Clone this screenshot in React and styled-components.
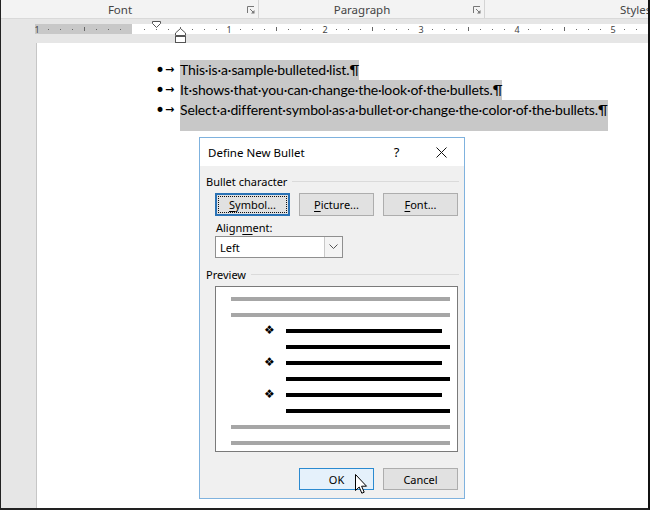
import React from "react";
import styled, { createGlobalStyle, css } from "styled-components";

const Global = createGlobalStyle`
  html, body { margin: 0; padding: 0; background: #fff; }
  #root { width: 650px; height: 510px; }
`;

const Frame = styled.div`
  width: 650px;
  height: 510px;
  box-sizing: border-box;
  border-left: 1px solid #222;
  border-right: 2px solid #111;
  border-bottom: 2px solid #222;
  display: flex;
  flex-direction: column;
  overflow: hidden;
  background: #e6e6e6;
`;

const Ribbon = styled.div`
  flex: 0 0 19px;
  box-sizing: border-box;
  display: flex;
  background: #f3f3f3;
  border-bottom: 1px solid #d9d9d9;
  font-family: "Noto Sans", sans-serif;
  font-size: 11.5px;
  color: #444;
  white-space: nowrap;
`;

const Group = styled.div`
  flex: 0 0 ${(p) => p.$w}px;
  box-sizing: border-box;
  display: flex;
  align-items: center;
  border-right: 1px solid #d4d4d4;
  padding: 0 3px 0 ${(p) => p.$pl || 0}px;
`;

const GroupLabel = styled.span`
  flex: 1;
  text-align: ${(p) => (p.$left ? "left" : "center")};
  padding-right: ${(p) => (p.$left ? 0 : 8)}px;
`;

const Launcher = styled.svg`
  flex: 0 0 8px;
  width: 8px;
  height: 8px;
  margin-top: 2px;
`;

const RulerRow = styled.div`
  position: relative;
  flex: 0 0 24px;
  box-sizing: border-box;
  padding: 5px 0 0 34px;
`;

const RulerSvg = styled.svg`
  display: block;
  width: 613px;
  height: 10px;
  overflow: visible;
`;

const Marker = styled.svg`
  position: absolute;
  left: ${(p) => p.$x}px;
  top: ${(p) => p.$y}px;
`;

const Workspace = styled.div`
  flex: 1;
  display: flex;
  padding-left: 35px;
  min-height: 0;
`;

const Page = styled.div`
  flex: 1;
  background: #fff;
  border-left: 1px solid #c6c6c6;
  padding-top: 17px;
  display: flex;
  flex-direction: column;
  align-items: flex-start;
`;

const List = styled.div`
  margin-left: 119px;
  display: flex;
  flex-direction: column;
  align-items: flex-start;
`;

const Para = styled.div`
  display: flex;
  align-items: flex-start;
  font-family: Lato, "Liberation Sans", sans-serif;
  font-size: 14px;
  letter-spacing: -0.13px;
  line-height: 20px;
  color: #000;
  white-space: nowrap;
`;

const BulletCell = styled.span`
  flex: 0 0 24px;
  display: flex;
  align-items: center;
  height: 20px;
  letter-spacing: 0;
`;

const BulletDot = styled.span`
  width: 6px;
  height: 6px;
  display: flex;
  align-items: center;
  justify-content: center;
  font-family: "DejaVu Sans", sans-serif;
  font-size: 17px;
  line-height: 6px;
  margin-left: 1px;
`;

const TabMark = styled.span`
  font-family: "DejaVu Sans", sans-serif;
  font-size: 11px;
  font-weight: bold;
  margin-left: 2px;
`;

const Sel = styled.span`
  display: inline-block;
  background: #c8c8c8;
  padding-bottom: ${(p) => p.$after || 0}px;
`;

const Dialog = styled.div`
  position: relative;
  margin: 6px 0 0 162px;
  width: 266px;
  height: 362px;
  flex: 0 0 auto;
  box-sizing: border-box;
  border: 1px solid #7fb2de;
  background: #f0f0f0;
  display: flex;
  flex-direction: column;
  font-family: "Noto Sans", sans-serif;
  font-size: 11px;
  color: #000;
`;

const TitleBar = styled.div`
  flex: 0 0 28px;
  display: flex;
  align-items: center;
  background: #fff;
  padding-left: 8px;
`;

const Title = styled.span`
  flex: 1;
  font-size: 11.5px;
`;

const TitleBtn = styled.span`
  width: 45px;
  height: 28px;
  display: flex;
  align-items: center;
  justify-content: center;
  font-size: 13px;
`;

const Body = styled.div`
  flex: 1;
  display: flex;
  flex-direction: column;
  padding: 7px 5px 0 6px;
`;

const SectionHead = styled.div`
  height: 16px;
  margin-top: ${(p) => p.$mt || 0}px;
  display: flex;
  align-items: center;
  gap: 5px;
  &::after {
    content: "";
    flex: 1;
    border-top: 1px solid #dadada;
  }
`;

const ButtonRow = styled.div`
  display: flex;
  gap: 9px;
  margin: 4px 0 0 9px;
`;

const Btn = styled.div`
  position: relative;
  width: 75px;
  height: ${(p) => p.$h || 23}px;
  box-sizing: border-box;
  display: flex;
  align-items: center;
  justify-content: center;
  background: #e1e1e1;
  border: 1px solid #adadad;
  ${(p) =>
    p.$focus &&
    css`
      border: 2px solid #2a72b5;
      &::after {
        content: "";
        position: absolute;
        inset: 1px;
        border: 1px dotted #111;
      }
    `}
  ${(p) =>
    p.$hover &&
    css`
      background: #e5f1fb;
      border: 1px solid #2b8ad0;
    `}
`;

const Key = styled.span`
  text-decoration: underline;
  text-underline-offset: 2px;
`;

const FieldLabel = styled.div`
  margin: 5px 0 0 10px;
  line-height: 14px;
`;

const Select = styled.div`
  margin: 1px 0 0 9px;
  width: 128px;
  height: 22px;
  box-sizing: border-box;
  border: 1px solid #8f8f8f;
  background: #fff;
  display: flex;
  align-items: center;
`;

const SelectValue = styled.span`
  flex: 1;
  padding-left: 4px;
`;

const SelectArrow = styled.span`
  width: 18px;
  height: 20px;
  box-sizing: border-box;
  border-left: 1px solid #c9c9c9;
  background: #f4f4f4;
  display: flex;
  align-items: center;
  justify-content: center;
`;

const PreviewBox = styled.div`
  margin: 4px 0 0 9px;
  width: 243px;
  height: 166px;
  box-sizing: border-box;
  border: 1px solid #7a7a7a;
  background: #fff;
  padding: 10px 7px 0 15px;
  display: flex;
  flex-direction: column;
  gap: 12px;
`;

const PRow = styled.div`
  display: flex;
  align-items: center;
  height: 4px;
`;

const PSym = styled.span`
  flex: 0 0 55px;
  box-sizing: border-box;
  padding-left: 33px;
  font-family: "DejaVu Sans", sans-serif;
  font-size: 12px;
  line-height: 10px;
  color: #000;
  margin-top: -3px;
`;

const PLine = styled.div`
  flex: 1;
  height: 4px;
  background: ${(p) => (p.$dark ? "#000" : "#a6a6a6")};
  margin-left: ${(p) => p.$ml || 0}px;
  margin-right: ${(p) => p.$mr || 0}px;
`;

const Footer = styled.div`
  margin-top: 16px;
  display: flex;
  justify-content: flex-end;
  gap: 9px;
  padding-right: 1px;
`;

const Cursor = styled.svg`
  position: absolute;
  left: 155px;
  top: 336px;
`;

function LauncherIcon() {
  return (
    <Launcher viewBox="0 0 8 8">
      <path d="M0.5 7 V0.5 H7" fill="none" stroke="#777" strokeWidth="1" />
      <path d="M3 3 L6.5 6.5" stroke="#777" strokeWidth="1" />
      <path d="M7.5 7.5 H4 L7.5 4 Z" fill="#777" />
    </Launcher>
  );
}

function Ruler() {
  const items = [];
  for (let x = 1; x <= 612; x += 12) {
    const rel = (((x - 97) % 96) + 96) % 96;
    const n = Math.round((x - 97) / 96);
    if (rel === 0) {
      if (n !== 0)
        items.push(
          <text key={x} x={x + 1} y="8.5" fontSize="9" fill="#444" textAnchor="middle" fontFamily="Noto Sans, sans-serif">
            {Math.abs(n)}
          </text>
        );
    } else if (rel === 48) {
      items.push(<rect key={x} x={x} y="3" width="1" height="4" fill="#666" />);
    } else {
      items.push(<rect key={x} x={x} y="5" width="1" height="1" fill="#666" />);
    }
  }
  return (
    <RulerSvg viewBox="0 0 613 10">
      <rect x="0" y="0" width="97" height="10" fill="#c8c8c8" />
      <rect x="97" y="0" width="516" height="10" fill="#fff" />
      {items}
    </RulerSvg>
  );
}

const bullets = [
  "This·is·a·sample·bulleted·list.¶",
  "It·shows·that·you·can·change·the·look·of·the·bullets.¶",
  "Select·a·different·symbol·as·a·bullet·or·change·the·color·of·the·bullets.¶",
];

const preview = [
  { dark: false },
  { dark: false },
  { dark: true, sym: true, mr: 8 },
  { dark: true },
  { dark: true, sym: true, mr: 8 },
  { dark: true },
  { dark: true, sym: true, mr: 8 },
  { dark: true },
  { dark: false },
  { dark: false },
];

export default function App() {
  return (
    <>
      <Global />
      <Frame>
        <Ribbon>
          <Group $w={258}>
            <GroupLabel>Font</GroupLabel>
            <LauncherIcon />
          </Group>
          <Group $w={226}>
            <GroupLabel>Paragraph</GroupLabel>
            <LauncherIcon />
          </Group>
          <Group $w={300} $pl={135}>
            <GroupLabel $left>Styles</GroupLabel>
          </Group>
        </Ribbon>
        <RulerRow>
          <Ruler />
          <Marker $x={151} $y={2} width="9" height="8" viewBox="0 0 9 8">
            <path d="M0.5 0.5 H8.5 V2.5 L4.5 6.5 L0.5 2.5 Z" fill="#fff" stroke="#555" strokeWidth="1" />
          </Marker>
          <Marker $x={174} $y={9} width="11" height="15" viewBox="0 0 11 15">
            <path d="M5.5 0.5 L10.5 5 V7.5 H0.5 V5 Z" fill="#fff" stroke="#555" strokeWidth="1" />
            <rect x="0.5" y="8.5" width="10" height="6" fill="#fff" stroke="#555" strokeWidth="1" />
          </Marker>
        </RulerRow>
        <Workspace>
          <Page>
            <List>
              {bullets.map((t, i) => (
                <Para key={i}>
                  <BulletCell>
                    <BulletDot>•</BulletDot>
                    <TabMark>→</TabMark>
                  </BulletCell>
                  <Sel $after={i === bullets.length - 1 ? 11 : 0}>{t}</Sel>
                </Para>
              ))}
            </List>
            <Dialog>
              <TitleBar>
                <Title>Define New Bullet</Title>
                <TitleBtn>?</TitleBtn>
                <TitleBtn>
                  <svg width="11" height="11" viewBox="0 0 11 11">
                    <path d="M0.5 0.5 L10.5 10.5 M10.5 0.5 L0.5 10.5" stroke="#111" strokeWidth="1" />
                  </svg>
                </TitleBtn>
              </TitleBar>
              <Body>
                <SectionHead>Bullet character</SectionHead>
                <ButtonRow>
                  <Btn $focus>
                    <span><Key>S</Key>ymbol...</span>
                  </Btn>
                  <Btn>
                    <span><Key>P</Key>icture...</span>
                  </Btn>
                  <Btn>
                    <span><Key>F</Key>ont...</span>
                  </Btn>
                </ButtonRow>
                <FieldLabel>
                  Align<Key>m</Key>ent:
                </FieldLabel>
                <Select>
                  <SelectValue>Left</SelectValue>
                  <SelectArrow>
                    <svg width="9" height="6" viewBox="0 0 9 6">
                      <path d="M0.5 0.5 L4.5 4.5 L8.5 0.5" fill="none" stroke="#555" strokeWidth="1" />
                    </svg>
                  </SelectArrow>
                </Select>
                <SectionHead $mt={8}>Preview</SectionHead>
                <PreviewBox>
                  {preview.map((r, i) => (
                    <PRow key={i}>
                      {r.dark && <PSym>{r.sym ? "❖" : ""}</PSym>}
                      <PLine $dark={r.dark} $mr={r.mr} />
                    </PRow>
                  ))}
                </PreviewBox>
                <Footer>
                  <Btn $h={22} $hover>OK</Btn>
                  <Btn $h={22}>Cancel</Btn>
                </Footer>
              </Body>
              <Cursor width="14" height="21" viewBox="0 0 14 21">
                <path
                  d="M0.5 0.5 V16.5 L4.2 13 L6.8 19.2 L9.2 18.2 L6.6 12.2 L11.5 12.2 Z"
                  fill="#fff"
                  stroke="#000"
                  strokeWidth="1"
                  strokeLinejoin="miter"
                />
              </Cursor>
            </Dialog>
          </Page>
        </Workspace>
      </Frame>
    </>
  );
}
